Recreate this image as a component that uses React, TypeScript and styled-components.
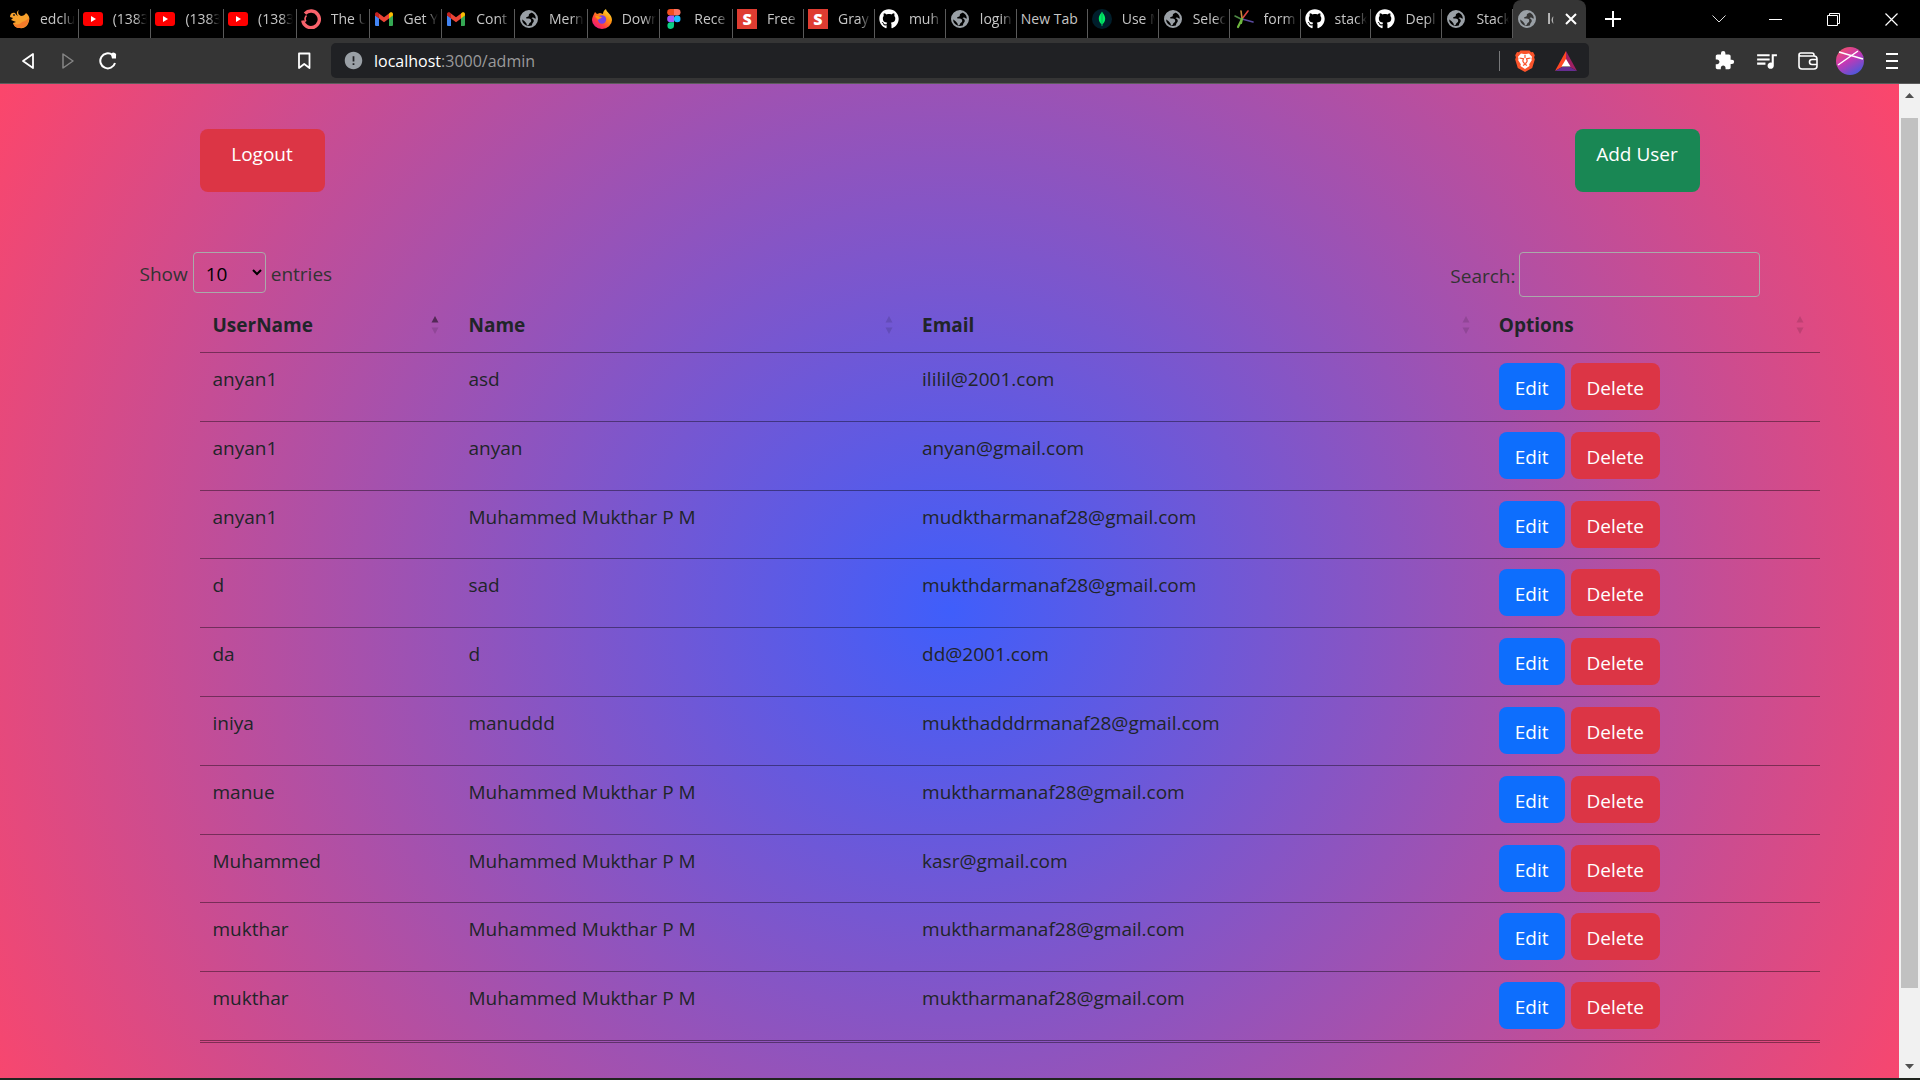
import React, { ReactNode } from "react";
import styled, { createGlobalStyle } from "styled-components";
import { FaGithub } from "react-icons/fa";
import { MdError, MdExtension, MdQueueMusic } from "react-icons/md";

const GlobalStyle = createGlobalStyle`
  *, *::before, *::after { box-sizing: border-box; }
  body { margin: 0; font-family: "Open Sans", "Noto Sans", sans-serif; overflow: hidden; }
  button, input, select { font-family: inherit; font-size: inherit; }
`;

const Window = styled.div`
  display: flex;
  flex-direction: column;
  height: 100vh;
  background: #20241f;
  padding-bottom: 2px;
`;

/* ---------- browser chrome ---------- */

const TabStrip = styled.header`
  display: flex;
  height: 38px;
  flex: none;
  background: #000;
`;

const Tabs = styled.nav`
  display: flex;
  flex: 1;
  min-width: 0;
  padding-left: 6px;
`;

const TabButton = styled.button<{ $active?: boolean; $grow: number }>`
  flex: ${(p) => p.$grow} 1 0;
  min-width: 0;
  display: flex;
  align-items: center;
  gap: 10px;
  padding: 0 4px;
  border: 0;
  border-radius: ${(p) => (p.$active ? "8px 8px 0 0" : "0")};
  background: ${(p) =>
    p.$active
      ? "#353535"
      : "linear-gradient(#5a5a5a, #5a5a5a) right bottom / 1px 29px no-repeat"};
  color: ${(p) => (p.$active ? "#fff" : "#c6c6c6")};
  font-size: 14px;
  line-height: 20px;
  text-align: left;
  svg { flex: none; }
`;

const TabTitle = styled.span<{ $fade: boolean }>`
  flex: 1;
  min-width: 0;
  overflow: hidden;
  white-space: nowrap;
  mask-image: ${(p) => (p.$fade ? "linear-gradient(to right, #000 65%, transparent)" : "none")};
`;

const TabActions = styled.div`
  display: flex;
  flex: none;
  align-items: center;
`;

const WindowButton = styled.button<{ $wide?: boolean }>`
  display: grid;
  place-items: center;
  width: ${(p) => (p.$wide ? "58px" : "57px")};
  height: 38px;
  padding: 0;
  border: 0;
  background: none;
  color: #fff;
`;

const NewTabButton = styled(WindowButton)`
  width: 54px;
  margin-right: 50px;
`;

const Toolbar = styled.div`
  display: flex;
  align-items: center;
  flex: none;
  height: 46px;
  border-bottom: 1px solid #5c5c5c;
  background: #353535;
  color: #fff;
`;

const NavButtons = styled.div`
  display: flex;
  flex: none;
  width: 331px;
  padding: 0 7px 0 8px;
`;

const ToolButton = styled.button<{ $end?: boolean }>`
  display: grid;
  place-items: center;
  width: 40px;
  height: 40px;
  padding: 0;
  border: 0;
  margin-left: ${(p) => (p.$end ? "auto" : "0")};
  background: none;
  color: inherit;
`;

const AddressBar = styled.div`
  display: flex;
  align-items: center;
  flex: 1;
  min-width: 0;
  height: 35px;
  padding: 0 12px;
  border-radius: 5px;
  background: #202124;
`;

const Address = styled.div`
  flex: 1;
  padding-left: 10px;
  color: #9a9a9b;
  font-size: 16px;
  line-height: 24px;
  b { font-weight: 400; color: #fff; }
`;

const ShieldGroup = styled.div`
  display: flex;
  align-items: center;
  gap: 20px;
  padding-left: 15px;
  height: 20px;
  border-left: 1px solid #77787a;
`;

const Extensions = styled.div`
  display: flex;
  justify-content: flex-end;
  gap: 2px;
  flex: none;
  width: 331px;
  padding-right: 8px;
`;

/* ---------- page ---------- */

const Viewport = styled.div`
  display: flex;
  flex: 1;
  min-height: 0;
`;

const Page = styled.main`
  flex: 1;
  min-width: 0;
  overflow: hidden;
  padding: 45px 60px 0;
  background: radial-gradient(circle at 50% 53%, #3f5efb 0%, #fc466b 100%);
  color: #212529;
  font-size: 19px;
  line-height: 30px;
`;

const Content = styled.div`
  max-width: 1620px;
  margin: 0 auto;
`;

const Actions = styled.div`
  display: flex;
  justify-content: space-between;
  padding: 0 60px;
  margin-bottom: 60px;
`;

const colors = { red: "#dc3545", green: "#198754", blue: "#0d6efd" };

const Button = styled.button<{ $color: keyof typeof colors }>`
  height: 47px;
  padding: 10px 16px 7px;
  border: 0;
  border-radius: 8px;
  background: ${(p) => colors[p.$color]};
  color: #fff;
  line-height: 30px;
`;

const BlockButton = styled(Button)`
  width: 125px;
  height: 63px;
  padding: 10px 0 23px;
`;

const Controls = styled.div`
  display: flex;
  justify-content: space-between;
  align-items: flex-start;
  color: #333;
  height: 48px;
`;

const Field = styled.label<{ $tight?: boolean }>`
  display: flex;
  align-items: center;
  gap: ${(p) => (p.$tight ? "3px" : "5px")};
`;

const FieldText = styled.span`
  padding-top: 2px;
`;

const Length = styled.select`
  width: 73px;
  height: 41px;
  padding: 6px 5px 4px 8px;
  border: 1px solid #aaa;
  border-radius: 4px;
  background: transparent;
  color: #000;
`;

const Search = styled.input`
  width: 241px;
  height: 45px;
  padding: 5px;
  border: 1px solid #aaa;
  border-radius: 4px;
  background: transparent;
`;

const Table = styled.table`
  width: 100%;
  height: 743px;
  margin-left: 60px;
  padding-bottom: 1px;
  border-bottom: 1px solid rgba(0, 0, 0, 0.4);
  border-spacing: 0;
  table-layout: fixed;
`;

const HeadCell = styled.th<{ $width: string }>`
  width: ${(p) => p.$width};
  height: 53px;
  padding: 0 16px 2px 13px;
  border-bottom: 1px solid rgba(0, 0, 0, 0.4);
  text-align: left;
  font-weight: 700;
`;

const HeadInner = styled.div`
  display: flex;
  align-items: center;
  justify-content: space-between;
`;

const Cell = styled.td`
  height: 68px;
  padding: 11px 13px 8px;
  border-bottom: 1px solid rgba(0, 0, 0, 0.4);
  vertical-align: top;
`;

const ActionCell = styled(Cell)`
  padding: 10px 13px;
`;

const RowActions = styled.div`
  display: flex;
  gap: 6px;
`;

const ScrollBar = styled.div`
  display: flex;
  flex-direction: column;
  align-items: center;
  flex: none;
  width: 21px;
  padding: 9px 0;
  background: #f1f1f1;
`;

const ScrollTrack = styled.div`
  flex: 1;
  width: 17px;
  padding: 20px 0 76px;
`;

const ScrollThumb = styled.div`
  height: 100%;
  background: #c1c1c1;
`;

/* ---------- icons ---------- */

const Phoenix = () => (
  <svg width="20" height="20" viewBox="0 0 20 20">
    <path d="M9 1C7 4 9 6 11 7c2 0 4-1 5-3 3 2 4 5 3 8-1 5-5 8-9 7-4 0-6-2-7-5l3-1-5-2 2-2-3-1C0 4 3 3 5 4c1 1 1 2 3 3C6 4 7 2 9 1z" fill="#f6a02c" />
    <path d="M19 9c0 6-4 10-9 10-4 0-6-2-7-5 4 3 7 1 9-1 3-1 5-2 7-4z" fill="#f47b2a" />
    <circle cx="4" cy="6" r="1" fill="#222" />
  </svg>
);
const YouTube = () => (
  <svg width="20" height="20" viewBox="0 0 20 20">
    <rect y="3" width="20" height="14" rx="3" fill="#f00" />
    <path d="M8 7v6l5-3z" fill="#fff" />
  </svg>
);
const Ring = () => (
  <svg width="20" height="20" viewBox="0 0 20 20" fill="none" stroke="#f9636c" strokeWidth="3.4">
    <path d="M4 4.6A8.3 8.3 0 1 1 1.8 11.5" />
    <path d="M5.5 6.5a5 5 0 0 0-.6 6" strokeWidth="1.6" />
  </svg>
);
const Gmail = () => (
  <svg width="20" height="20" viewBox="0 0 20 20">
    <path d="M1 6v10a1 1 0 0 0 1 1h3V9z" fill="#4285f4" />
    <path d="M19 6v10a1 1 0 0 1-1 1h-3V9z" fill="#34a853" />
    <path d="M15 4.5v5l4-3V5.2C19 3.2 17 2.8 15.8 3.7z" fill="#fbbc04" />
    <path d="M1 5.2v1.3l4 3v-5l-.8-.8C3 2.8 1 3.200 1 5.2z" fill="#c5221f" />
    <path d="M5 4.5l5 3.8 5-3.8v5l-5 3.8-5-3.8z" fill="#ea4335" />
  </svg>
);
const Globe = () => (
  <svg width="20" height="20" viewBox="0 0 20 20">
    <circle cx="10" cy="10" r="8" fill="none" stroke="#9aa0a6" strokeWidth="2" />
    <path
      d="M2 10C2 5 5 2 10 2c1.500 0 2.500.2 3 .6-.2 1.900-1.800 1.600-2.800 2.400-.9.900.2 1.700-.9 2.500-1 .6-2 .2-2.200 1.200-.1.900 1 .9 2.400.9 2 0 2.800 1 2.700 2.300-.1 1.700-1.700 1.400-2 2.700-.2 1.300-1 1.900-2.200 1.700C7.600 13.600 6 13 5 11.800 4.200 11 3 10.600 2 10z"
      fill="#9aa0a6"
    />
    <path
      d="M18 9c-1.300.8-2.500.6-3.300-.2-.9-.7-1.700-.2-2.200.4 1.700.5 2.600 1.800 2.200 3.300-.4 1.300-1.700 1.700-1.700 3.500l.5 1.300C16.500 15.500 18.500 13 18 9z"
      fill="#9aa0a6"
    />
  </svg>
);
const Firefox = () => (
  <svg width="20" height="20" viewBox="0 0 20 20">
    <defs>
      <linearGradient id="fox" x1="1" y1="0" x2="0.2" y2="1">
        <stop offset="0" stopColor="#fff44f" />
        <stop offset="0.4" stopColor="#ff980e" />
        <stop offset="0.75" stopColor="#ff3647" />
        <stop offset="1" stopColor="#e31587" />
      </linearGradient>
    </defs>
    <path d="M2 5l1-2 2 2 3-1 3 1c0-2 1-4 3-5 0 3 6 5 6 11a10 9 0 0 1-20 0c0-2 1-4 2-6z" fill="url(#fox)" />
    <circle cx="10" cy="10.5" r="4.2" fill="#7542e5" />
    <path d="M3 7c3-1 4 1 7 1-1 2-3 1-4 3-1-2-2-2-3-4z" fill="#ff980e" />
  </svg>
);
const Figma = () => (
  <svg width="20" height="20" viewBox="0 0 20 20">
    <path d="M10 0H6.500a3.300 3.300 0 0 0 0 6.600H10z" fill="#f24e1e" />
    <path d="M10 0h3.200a3.300 3.300 0 0 1 0 6.600H10z" fill="#ff7262" />
    <path d="M10 6.600H6.500a3.300 3.300 0 0 0 0 6.600H10z" fill="#a259ff" />
    <circle cx="13.200" cy="9.900" r="3.300" fill="#1abcfe" />
    <path d="M10 13.300H6.500a3.300 3.300 0 1 0 3.500 3.300z" fill="#0acf83" />
  </svg>
);
const SquareS = styled.span`
  flex: none;
  width: 20px;
  height: 20px;
  background: #df3c31;
  color: #fff;
  font-size: 16px;
  font-weight: 800;
  line-height: 20px;
  text-align: center;
`;
const GitHub = () => <FaGithub size={20} color="#fff" />;
const Mongo = () => (
  <svg width="20" height="20" viewBox="0 0 20 20">
    <circle cx="10" cy="10" r="10" fill="#001e2b" />
    <path d="M10 2.500c.5 2 3.200 3.200 3.200 7.300 0 3-1.700 4.700-2.800 5.400L10 17.500l-.4-2.300C8.500 14.500 6.800 12.800 6.800 9.800 6.800 5.700 9.500 4.500 10 2.500z" fill="#00ed64" />
    <path d="M10 3v14" stroke="#00a35c" strokeWidth="0.8" />
  </svg>
);
const Burst = () => (
  <svg width="20" height="20" viewBox="0 0 20 20" strokeLinecap="round">
    <g strokeWidth="1.600">
      <path d="M8 10 14 2" stroke="#d8453e" />
      <path d="M8 10 19 13" stroke="#5a4aa0" />
      <path d="M8 9 7 2" stroke="#c78a3b" />
      <path d="M7 10 1 7" stroke="#4f8b45" />
    </g>
    <path d="M8 10 4 18M8 10 7 14" stroke="#6fb83f" strokeWidth="2.200" />
  </svg>
);
const Bat = () => (
  <svg width="22" height="20" viewBox="0 0 22 20">
    <path d="M11 0 0 20l7-4 4-7z" fill="#ff4724" />
    <path d="M11 0l11 20-7-4-4-7z" fill="#9e1f63" />
    <path d="M0 20h22l-7-4H7z" fill="#662d91" />
    <path d="M11 8 15.500 15.500H6.500z" fill="#fff" />
  </svg>
);
const Shield = () => (
  <svg width="20" height="22" viewBox="0 0 20 22">
    <path d="M5.500.500h9l1.500 1.700 2-.2 1.800 3.200-.7 2 .7 2.300-2.600 8.500L10 22l-7.200-4L.2 9.500.9 7.200l-.7-2L2 2l2 .2z" fill="#fb542b" />
    <path d="M6 3.500l4 .8 4-.8 3 3.200-.5 2 .3 1.600-2.600 4 .3 1.700L10 19l-4.500-3 .3-1.700-2.600-4 .3-1.600-.5-2z" fill="#fff" />
    <path d="M4.500 8l4 .8-.7 2.200.9 1.800L10 13.500l1.300-.7.900-1.800-.7-2.200 4-.8M8 15.500l2-1.200 2 1.200M10 5v3" fill="none" stroke="#fb542b" strokeWidth="1.200" />
  </svg>
);
const Avatar = () => (
  <svg width="28" height="28" viewBox="0 0 28 28">
    <defs>
      <linearGradient id="av" x1="0.2" y1="0" x2="0.8" y2="1">
        <stop offset="0" stopColor="#f0506a" />
        <stop offset="0.45" stopColor="#c637b4" />
        <stop offset="1" stopColor="#3d5ce0" />
      </linearGradient>
    </defs>
    <circle cx="14" cy="14" r="14" fill="url(#av)" />
    <path d="M3 5l24 7M2 18 22 4" stroke="#fff" strokeWidth="1.500" fill="none" />
  </svg>
);

const SortIcon = ({ ascending }: { ascending?: boolean }) => (
  <svg width="8" height="20" viewBox="0 0 8 20" aria-hidden="true">
    <path d="M4 1 7.500 7.500H.5z" fill="#000" fillOpacity={ascending ? 0.5 : 0.125} />
    <path d="M4 19 .5 12.500h7z" fill="#000" fillOpacity="0.125" />
  </svg>
);

/* ---------- data ---------- */

const tabs: { icon: ReactNode; title: string }[] = [
  { icon: <Phoenix />, title: "edclu" },
  { icon: <YouTube />, title: "(1383" },
  { icon: <YouTube />, title: "(1383" },
  { icon: <YouTube />, title: "(1383" },
  { icon: <Ring />, title: "The U" },
  { icon: <Gmail />, title: "Get Y" },
  { icon: <Gmail />, title: "Cont" },
  { icon: <Globe />, title: "Mern" },
  { icon: <Firefox />, title: "Down" },
  { icon: <Figma />, title: "Rece" },
  { icon: <SquareS>S</SquareS>, title: "Free" },
  { icon: <SquareS>S</SquareS>, title: "Gray" },
  { icon: <GitHub />, title: "muh" },
  { icon: <Globe />, title: "login" },
  { icon: null, title: "New Tab" },
  { icon: <Mongo />, title: "Use M" },
  { icon: <Globe />, title: "Selec" },
  { icon: <Burst />, title: "form" },
  { icon: <GitHub />, title: "stack" },
  { icon: <GitHub />, title: "Depl" },
  { icon: <Globe />, title: "Stack" },
];

const tabShare = (index: number) => (index < 10 ? 73 : 71);

const columns = [
  { label: "UserName", width: "15.8%" },
  { label: "Name", width: "28%" },
  { label: "Email", width: "35.6%" },
  { label: "Options", width: "20.6%" },
];

const users = [
  ["anyan1", "asd", "ililil@2001.com"],
  ["anyan1", "anyan", "anyan@gmail.com"],
  ["anyan1", "Muhammed Mukthar P M", "mudktharmanaf28@gmail.com"],
  ["d", "sad", "mukthdarmanaf28@gmail.com"],
  ["da", "d", "dd@2001.com"],
  ["iniya", "manuddd", "mukthadddrmanaf28@gmail.com"],
  ["manue", "Muhammed Mukthar P M", "muktharmanaf28@gmail.com"],
  ["Muhammed", "Muhammed Mukthar P M", "kasr@gmail.com"],
  ["mukthar", "Muhammed Mukthar P M", "muktharmanaf28@gmail.com"],
  ["mukthar", "Muhammed Mukthar P M", "muktharmanaf28@gmail.com"],
];

export default function App() {
  return (
    <Window>
      <GlobalStyle />
      <TabStrip>
        <Tabs>
          {tabs.map((tab, i) => (
            <TabButton key={i} $grow={tabShare(i)}>
              {tab.icon}
              <TabTitle $fade={tab.icon !== null}>{tab.title}</TabTitle>
            </TabButton>
          ))}
          <TabButton $active $grow={73}>
            <Globe />
            <TabTitle $fade>lo</TabTitle>
            <svg width="18" height="14" viewBox="0 0 18 14" stroke="#fff" strokeWidth="2">
              <path d="M2 2l10 10M12 2 2 12" />
            </svg>
          </TabButton>
        </Tabs>
        <TabActions>
          <NewTabButton aria-label="New tab">
            <svg width="16" height="16" viewBox="0 0 16 16" stroke="#fff" strokeWidth="2">
              <path d="M8 0v16M0 8h16" />
            </svg>
          </NewTabButton>
          <WindowButton aria-label="Search tabs">
            <svg width="14" height="8" viewBox="0 0 14 8" fill="none" stroke="#ddd">
              <path d="M.5.500 7 7 13.500.500" />
            </svg>
          </WindowButton>
          <WindowButton aria-label="Minimize">
            <svg width="13" height="13" viewBox="0 0 13 13" stroke="#fff">
              <path d="M0 6.500h13" />
            </svg>
          </WindowButton>
          <WindowButton $wide aria-label="Restore">
            <svg width="13" height="13" viewBox="0 0 13 13" fill="none" stroke="#fff">
              <path d="M.5 2.500h10v10H.5zM2.500 2.500v-2h10v10h-2" />
            </svg>
          </WindowButton>
          <WindowButton $wide aria-label="Close">
            <svg width="13" height="13" viewBox="0 0 13 13" stroke="#fff" strokeWidth="1.200">
              <path d="M.5.500l12 12M12.500.500l-12 12" />
            </svg>
          </WindowButton>
        </TabActions>
      </TabStrip>

      <Toolbar>
        <NavButtons>
          <ToolButton aria-label="Back">
            <svg width="14" height="18" viewBox="0 0 14 18" fill="none" stroke="#fff" strokeWidth="1.800" strokeLinejoin="round">
              <path d="M12 2v14L2 9z" />
            </svg>
          </ToolButton>
          <ToolButton aria-label="Forward">
            <svg width="14" height="18" viewBox="0 0 14 18" fill="none" stroke="#868686" strokeWidth="1.500" strokeLinejoin="round">
              <path d="M2 2v14l10-7z" />
            </svg>
          </ToolButton>
          <ToolButton aria-label="Reload">
            <svg width="18" height="18" viewBox="0 0 18 18" fill="none" stroke="#fff" strokeWidth="2">
              <path d="M13.500 3A7.500 7.500 0 1 0 16 11" />
              <path d="M12 2.500a2.500 2.500 0 1 1 5 1.500v2.500h-4z" fill="#fff" stroke="none" />
            </svg>
          </ToolButton>
          <ToolButton $end aria-label="Bookmark this page">
            <svg width="14" height="18" viewBox="0 0 14 18" fill="none" stroke="#fff" strokeWidth="1.800" strokeLinejoin="round">
              <path d="M2 1.500h10.500V16L7.200 12 2 16z" />
            </svg>
          </ToolButton>
        </NavButtons>
        <AddressBar>
          <MdError size={21} color="#9aa0a6" />
          <Address><b>localhost</b>:3000/admin</Address>
          <ShieldGroup>
            <Shield />
            <Bat />
          </ShieldGroup>
        </AddressBar>
        <Extensions>
          <ToolButton aria-label="Extensions"><MdExtension size={21} /></ToolButton>
          <ToolButton aria-label="Media"><MdQueueMusic size={25} /></ToolButton>
          <ToolButton aria-label="Wallet">
            <svg width="20" height="18" viewBox="0 0 20 18" fill="none" stroke="#fff" strokeWidth="1.600">
              <path d="M16 4V3a2 2 0 0 0-2-2H3a2 2 0 0 0-2 2v11a3 3 0 0 0 3 3h12a3 3 0 0 0 3-3V7a3 3 0 0 0-3-3H3a2 2 0 0 1-2-1" />
              <path d="M19 7.500h-5a2.500 2.500 0 0 0 0 5h5" />
            </svg>
          </ToolButton>
          <ToolButton aria-label="Profile"><Avatar /></ToolButton>
          <ToolButton aria-label="Menu">
            <svg width="12" height="18" viewBox="0 0 12 18" stroke="#fff" strokeWidth="2">
              <path d="M0 2h12M0 9h12M0 16h12" />
            </svg>
          </ToolButton>
        </Extensions>
      </Toolbar>

      <Viewport>
        <Page>
          <Content>
            <Actions>
              <BlockButton $color="red">Logout</BlockButton>
              <BlockButton $color="green">Add User</BlockButton>
            </Actions>
            <Controls>
              <Field>
                <FieldText>Show</FieldText>
                <Length defaultValue="10">
                  <option>10</option>
                  <option>25</option>
                  <option>50</option>
                  <option>100</option>
                </Length>
                <FieldText>entries</FieldText>
              </Field>
              <Field $tight>
                <FieldText>Search:</FieldText>
                <Search type="search" />
              </Field>
            </Controls>
            <Table>
              <thead>
                <tr>
                  {columns.map((c, i) => (
                    <HeadCell key={c.label} $width={c.width}>
                      <HeadInner>
                        {c.label}
                        <SortIcon ascending={i === 0} />
                      </HeadInner>
                    </HeadCell>
                  ))}
                </tr>
              </thead>
              <tbody>
                {users.map((user, i) => (
                  <tr key={i}>
                    {user.map((value, j) => (
                      <Cell key={j}>{value}</Cell>
                    ))}
                    <ActionCell>
                      <RowActions>
                        <Button $color="blue">Edit</Button>
                        <Button $color="red">Delete</Button>
                      </RowActions>
                    </ActionCell>
                  </tr>
                ))}
              </tbody>
            </Table>
          </Content>
        </Page>
        <ScrollBar aria-hidden="true">
          <svg width="9" height="5" viewBox="0 0 9 5"><path d="M4.500 0 9 5H0z" fill="#505050" /></svg>
          <ScrollTrack>
            <ScrollThumb />
          </ScrollTrack>
          <svg width="9" height="5" viewBox="0 0 9 5"><path d="M0 0h9L4.500 5z" fill="#505050" /></svg>
        </ScrollBar>
      </Viewport>
    </Window>
  );
}
